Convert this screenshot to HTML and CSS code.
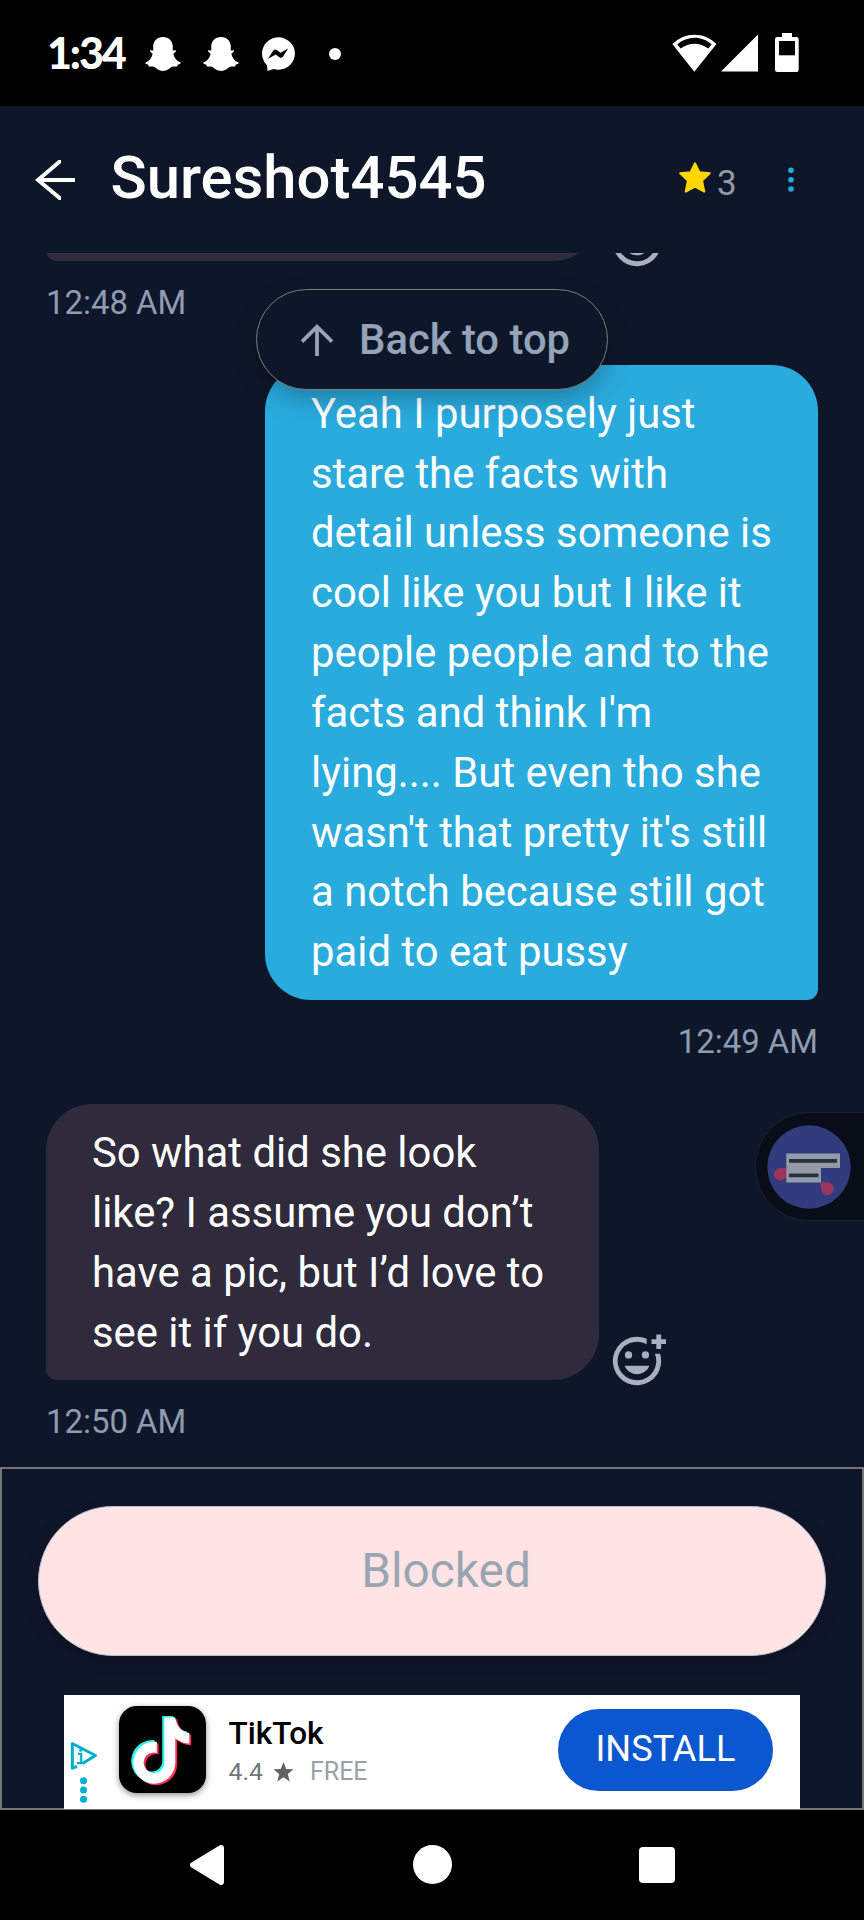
FILE: index.html
```html
<!DOCTYPE html>
<html lang="en">
<head>
<meta charset="utf-8">
<title>Sureshot4545</title>
<link rel="stylesheet" href="styles.css">
</head>
<body>
<svg class="defs" width="0" height="0" aria-hidden="true">
  <symbol id="ghost" viewBox="0 0 36 34">
    <path d="M18 0c6 0 9.6 4 9.8 9.500l-.1 4c1.200.1 2.600-.9 3.200.1.600 1.300-2 2.300-2.600 3.100 1 4.400 3.500 7.300 7.200 8.800.8.600-.2 1.500-2.600 2-.5.700-.3 1.700-1 2-1.700.1-3.500-.4-5.300.6-2.400 1.500-4.300 3.900-8.600 3.900s-6.200-2.400-8.600-3.900c-1.800-1-3.600-.5-5.300-.6-.7-.3-.5-1.300-1-2-2.400-.5-3.400-1.400-2.600-2 3.700-1.500 6.200-4.400 7.200-8.800-.6-.8-3.200-1.800-2.600-3.100.6-1 2-.0 3.200-.1l-.1-4C8.400 4 12 0 18 0z" fill="#fff"/>
  </symbol>
  <symbol id="react" viewBox="0 0 24 24">
    <path d="M16 2.840V5.070A8 8 0 1 0 19.400 9H21.540A10 10 0 1 1 16 2.840z M22 3V1h-2v2h-2v2h2v2h2V5h2V3z M12 17.500c2.330 0 4.310-1.460 5.110-3.500H6.890c.8 2.040 2.780 3.500 5.110 3.500z" fill="#a8b0c0"/>
    <circle cx="8.500" cy="9.500" r="1.500" fill="#a8b0c0"/>
    <circle cx="15.500" cy="9.500" r="1.500" fill="#a8b0c0"/>
  </symbol>
  <symbol id="note" viewBox="0 0 87 87">
    <path d="M45 11H56C57 19 62 25.500 70 26.500V37C65 37 60 35 56 32V56A21 21 0 1 1 37.500 35.200V46.300A10.300 10.300 0 1 0 45 56Z"/>
  </symbol>
</svg>

<div class="phone">
  <div class="status">
    <span class="clock">1:34</span>
    <svg class="snap" width="36" height="34"><use href="#ghost"/></svg>
    <svg class="snap second" width="36" height="34"><use href="#ghost"/></svg>
    <svg class="messenger" width="34" height="34" viewBox="0 0 34 34">
      <path d="M17 .3a16.600 16.200 0 1 1-4.500 31.700L6.500 34l-.4-5.600A16.300 16.300 0 0 1 17 .3z" fill="#fff"/>
      <path d="M7 21.800l5.300-8.300c1-1.400 2.300-1.400 3.500-.5l3.600 2.700 7.800-4.300-5.300 8.300c-1 1.400-2.400 1.400-3.600.5l-3.500-2.700z" fill="#000"/>
    </svg>
    <span class="dot"></span>
    <svg class="system" width="128" height="40" viewBox="0 0 128 40">
      <path d="M22.300 38.700L.3 11C13-1.500 32-1.500 44.500 11z" fill="#fff"/>
      <path d="M5.200 11.500C15 2.600 30 2.600 39.600 11.500L36.300 15.600C28 9 17 9 8.700 15.600z" fill="#000"/>
      <path d="M49 38.500L86 1.500V38.500z" fill="#fff"/>
      <path d="M110 0h10v4h4.500q2.200 0 2.200 2.200v30.600q0 2.200-2.200 2.200h-19.300q-2.200 0-2.200-2.200V6.200q0-2.200 2.200-2.200h4.800z" fill="#fff"/>
      <path d="M107 8h16v14.300h-16z" fill="#000"/>
    </svg>
  </div>

  <header class="header">
    <svg class="back" width="40" height="40" viewBox="0 0 40 40" fill="none" stroke="#fff">
      <path d="M40 20H3M26 1.300h-1L3 20l22 18.300h1" stroke-width="3.900"/>
    </svg>
    <h1 class="title">Sureshot4545</h1>
    <svg class="star" width="32" height="31" viewBox="0 0 32 31">
      <path d="M16 1.300l4.300 8.900 10.500 1.100-7.700 7.300 2.200 11L16 24.500l-9.300 5.100 2.200-11L1.200 11.300l10.500-1.100z" fill="#ffd700" stroke="#ffd700" stroke-width="2" stroke-linejoin="round"/>
    </svg>
    <span class="count">3</span>
    <svg class="more" width="6" height="26" viewBox="0 0 6 26" fill="#29abe2">
      <circle cx="3" cy="3.200" r="2.800"/><circle cx="3" cy="12.700" r="2.800"/><circle cx="3" cy="22" r="2.800"/>
    </svg>
  </header>

  <main class="chat">
    <div class="row">
      <div class="bubble theirs clipped"></div>
      <svg class="react" width="58" height="58"><use href="#react"/></svg>
    </div>
    <div class="time">12:48 AM</div>
    <div class="bubble mine">Yeah I purposely just<br>stare the facts with<br>detail unless someone is<br>cool like you but I like it<br>people people and to the<br>facts and think I'm<br>lying.... But even tho she<br>wasn't that pretty it's still<br>a notch because still got<br>paid to eat pussy</div>
    <div class="time sent">12:49 AM</div>
    <div class="row">
      <div class="bubble theirs">So what did she look<br>like? I assume you don’t<br>have a pic, but I’d love to<br>see it if you do.</div>
      <svg class="react" width="58" height="58"><use href="#react"/></svg>
    </div>
    <div class="time last">12:50 AM</div>

    <div class="to-top">
      <svg width="32" height="32" viewBox="0 0 32 32" fill="none" stroke="#94a3b8" stroke-width="3.800">
        <path d="M16 32V2.500M1 17.700L16 2.700l15 15"/>
      </svg>
      <span>Back to top</span>
    </div>
    <div class="float">
      <svg width="84" height="84" viewBox="0 0 84 84">
        <circle cx="42" cy="42" r="41.700" fill="#303c7b"/>
        <path d="M19.500 43v6a6.300 6.300 0 1 1-6.300-6z" fill="#9a3460"/>
        <path d="M54 57.300h6.500a6.400 6.400 0 1 1-6.500 6.400z" fill="#9a3460"/>
        <path d="M19.300 28.500h53.700v14.500H54v14.500H19.300z" fill="#959aa8"/>
        <path d="M22 34h48v3.700H22zM22 48.500h29.500v3.700H22z" fill="#2c303b"/>
      </svg>
    </div>
  </main>

  <footer class="composer">
    <div class="blocked">Blocked</div>
    <div class="ad">
      <svg class="adinfo" width="28" height="62" viewBox="0 0 28 62">
        <path d="M7 25.500L2.300 27.200V2.500L25.500 14.500L12.500 22.500" fill="none" stroke="#00aecd" stroke-width="3" stroke-linejoin="round"/>
        <path d="M8 12.800h3.200v9.200M7 22.200h6.500" fill="none" stroke="#00aecd" stroke-width="2.200"/>
        <circle cx="10.600" cy="9.300" r="1.500" fill="#00aecd"/>
        <circle cx="13.500" cy="39.700" r="3.500" fill="#00aecd"/><circle cx="13.500" cy="49" r="3.500" fill="#00aecd"/><circle cx="13.500" cy="58.300" r="3.500" fill="#00aecd"/>
      </svg>
      <svg class="tiktok" width="87" height="87" viewBox="0 0 87 87">
        <use href="#note" x="-1.800" y="-1" fill="#25f4ee"/>
        <use href="#note" x="2.200" y="2.200" fill="#fe2c55"/>
        <use href="#note" x=".3" y=".6" fill="#fff"/>
      </svg>
      <div class="app">
        <div class="name">TikTok</div>
        <div class="meta"><span>4.4</span>
          <svg width="21" height="20" viewBox="0 0 21 20"><path d="M10.500 0l2.700 6.900 7.300.4-5.700 4.700 1.900 7.400-6.200-4.100-6.200 4.100 1.900-7.400L.5 7.300l7.300-.4z" fill="#616161"/></svg>
          <span class="free">FREE</span></div>
      </div>
      <div class="install">INSTALL</div>
    </div>
  </footer>

  <nav class="nav">
    <svg width="36" height="40" viewBox="0 0 36 40"><path d="M32 3L4 20l28 17z" fill="#fff" stroke="#fff" stroke-width="6" stroke-linejoin="round"/></svg>
    <span class="home"></span>
    <span class="recent"></span>
  </nav>
</div>
</body>
</html>
```
FILE: styles.css
```css
* { box-sizing: border-box; }
body { margin: 0; background: #000; font-family: Roboto, "Liberation Sans", sans-serif; }
svg { display: block; flex: none; }
.defs { position: absolute; }
.phone { width: 864px; height: 1920px; display: flex; flex-direction: column; overflow: hidden; background: #0e1729; }

.status { height: 106px; flex: none; background: #000; display: flex; align-items: flex-start; padding: 33px 64px 0 47px; }
.clock { width: 98px; color: #fff; font: 900 43px/40px Lato, sans-serif; letter-spacing: -2.100px; white-space: nowrap; }
.snap { margin-top: 4px; }
.snap.second { margin-left: 22px; }
.messenger { margin: 4px 0 0 22px; }
.dot { width: 12px; height: 12px; border-radius: 50%; background: #fff; margin: 15px 0 0 34px; }
.system { margin-left: auto; }

.header { height: 147px; flex: none; display: flex; align-items: center; padding: 0 70px 0 35px; }
.title { margin: -3px 0 0 35.500px; color: #fff; font-size: 59.800px; font-weight: 500; line-height: 70px; }
.star { margin: -5px 0 0 auto; }
.count { margin: 9px 0 0 6px; width: 21px; color: #9499a8; font-size: 35px; line-height: 40px; }
.more { margin-left: 50px; }

.chat { position: relative; height: 1214px; flex: none; overflow: hidden; display: flex; flex-direction: column; justify-content: flex-end; padding: 0 46px; }
.row { display: flex; align-items: flex-end; flex: none; }
.react { margin: 0 0 -9.500px 9px; }
.bubble { width: 553px; flex: none; padding: 19px 0 17px 46px; color: #fff; font-size: 41.850px; line-height: 60px; white-space: nowrap; }
.theirs { background: #302b3c; border-radius: 46px 46px 46px 11px; }
.clipped { height: 120px; }
.mine { background: #29abdd; border-radius: 46px 46px 11px 46px; align-self: flex-end; padding: 18.600px 0 17.900px 46px; line-height: 59.850px; }
.time { margin: 23px 0 43px; flex: none; color: #8e9bb1; font-size: 32.900px; line-height: 38px; }
.time.sent { text-align: right; }
.time.last { margin-bottom: 26px; }

.to-top { position: absolute; left: 256px; top: 36px; width: 352px; height: 101px; border: 1.500px solid #7d7c7e; border-radius: 51px; background: #0e1729; box-shadow: 0 9px 24px rgba(0, 0, 0, .25); display: flex; align-items: center; gap: 26px; padding-left: 44px; color: #94a3b8; font-size: 41.800px; font-weight: 500; white-space: nowrap; }
.float { position: absolute; right: -10px; top: 859px; width: 119px; height: 109px; border: 1px solid #1a2030; border-radius: 54px 0 0 54px; background: #090d18; padding: 12px 0 0 11px; }

.composer { position: relative; height: 343px; flex: none; border: 2px solid #747477; padding: 37px 36px 0; }
.blocked { height: 150px; border: 1px solid #b9bfca; border-radius: 76px; background: #ffe4e5; box-shadow: 0 6px 14px rgba(16, 12, 26, .5); padding: 35px 0 0 28px; text-align: center; color: #9ba4b1; font-size: 47.800px; line-height: 58px; }
.ad { height: 114px; margin: 39px 26px 0; background: #fff; display: flex; align-items: flex-start; }
.adinfo { margin: 46px 0 0 6px; }
.tiktok { margin: 11px 0 0 21px; background: #000; border-radius: 18px; box-shadow: 0 2px 6px rgba(0, 0, 0, .45); }
.app { margin: 20px 0 0 22.500px; white-space: nowrap; }
.name { color: #000; font-size: 31.500px; font-weight: 500; line-height: 38px; }
.meta { display: flex; align-items: center; color: #70757a; font-size: 24.800px; line-height: 38px; }
.meta svg { margin-left: 10px; }
.free { margin-left: 16px; color: #9aa0a6; font-size: 25px; }
.install { margin: 14px 27px 0 auto; width: 215px; height: 82px; border-radius: 41px; background: #0b57d0; color: #fff; font-size: 36.200px; line-height: 80px; text-align: center; }

.nav { height: 110px; flex: none; background: #000; display: flex; align-items: flex-start; padding: 35px 189px 0; justify-content: space-between; }
.home { width: 39px; height: 39px; border-radius: 50%; background: #fff; }
.recent { width: 36px; height: 36px; margin-top: 2px; border-radius: 4px; background: #fff; }
```
